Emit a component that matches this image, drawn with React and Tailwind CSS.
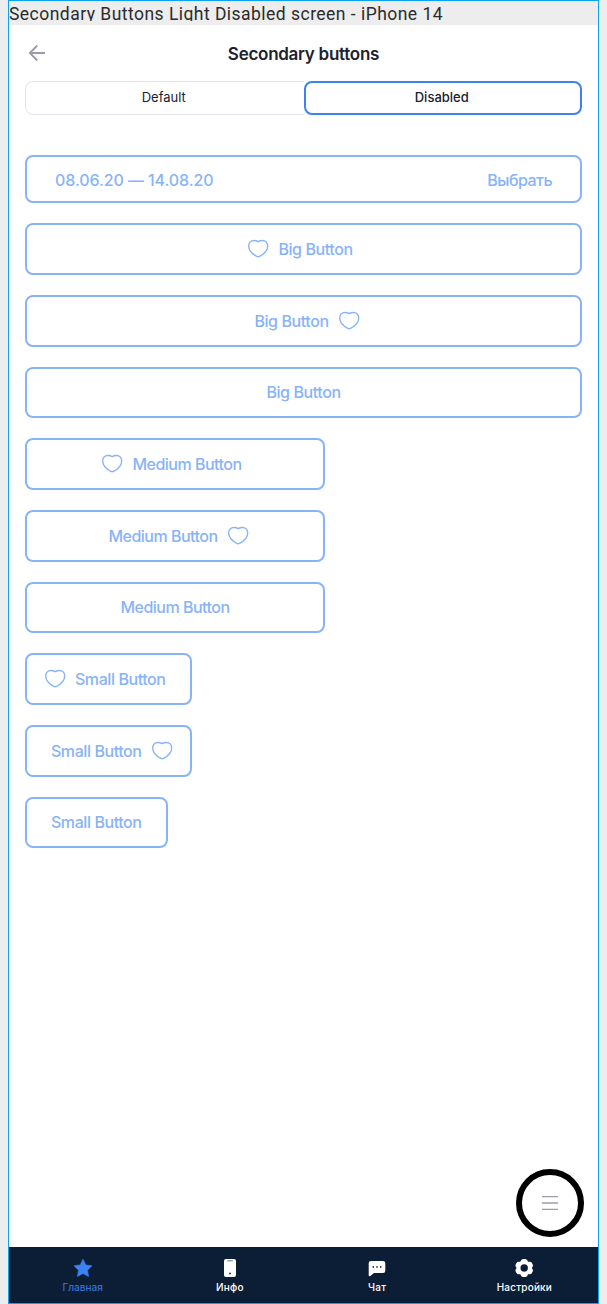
import React from "react";

function Heart() {
  return (
    <svg className="size-6 shrink-0" viewBox="0 0 24 24" fill="none" stroke="currentColor" strokeWidth="1.4" strokeLinejoin="round">
      <path d="M12.2 4.7C10.9 3.9 9.5 3.5 8 3.5C4.9 3.5 2.7 5.7 2.7 8.9C2.7 13.5 7.2 17.4 10.9 19.4Q12.2 20.1 13.5 19.4C17.2 17.4 21.7 13.5 21.7 8.9C21.7 5.7 19.5 3.5 16.4 3.5C14.9 3.5 13.5 3.9 12.2 4.7Z" />
    </svg>
  );
}

const sizes = {
  Big: "w-full",
  Medium: "w-[300px]",
  Small: "w-[166.5px]",
  SmallPlain: "w-[142.5px]",
};

const tracking = {
  Big: "tracking-[-0.42px]",
  Medium: "tracking-[-0.51px]",
  Small: "tracking-[-0.42px]",
};

function OutlineButton({ size, icon }) {
  const pad = icon === "left" ? "pl-4 pr-6" : icon === "right" ? "pl-6 pr-4" : "px-6 pb-0.5";
  const width = size === "Small" && !icon ? sizes.SmallPlain : sizes[size];
  return (
    <button
      disabled
      className={`flex shrink-0 items-center justify-center gap-2 rounded-lg border-2 border-[#88b3f8] text-base font-medium whitespace-nowrap text-[#88b3f8] ${icon ? "h-[52px]" : "h-[51px]"} ${pad} ${width} ${tracking[size]}`}
    >
      {icon === "left" && <Heart />}
      <span>{size} Button</span>
      {icon === "right" && <Heart />}
    </button>
  );
}

function NavItem({ label, active, children }) {
  return (
    <div className={`flex flex-1 flex-col items-center pt-[11px] ${active ? "text-[#3c82f1]" : "text-white"}`}>
      <svg className="size-5" viewBox="0 0 20 20" fill="currentColor">
        {children}
      </svg>
      <span className={`mt-[3px] text-[10px] leading-3 font-medium ${active ? "tracking-[0.02px] text-[#3572d4]" : "tracking-[0.2px]"}`}>{label}</span>
    </div>
  );
}

export default function App() {
  return (
    <div className="h-[1304px] w-[607px] bg-[#ededed] pl-2 font-['Inter','Roboto',sans-serif] text-[#20212f]">
      <div className="relative flex h-[1304px] w-[591px] flex-col border border-[#08a5ee] bg-white">
        <div className="h-6 shrink-0 bg-[#ededed]">
          <div className="h-[20px] overflow-hidden font-['Roboto',sans-serif] text-[17.5px] leading-[26px] tracking-[0.47px] whitespace-nowrap text-[#2b2b2b]">
            Secondary Buttons Light Disabled screen - iPhone 14
          </div>
        </div>

        <header className="grid h-14 shrink-0 grid-cols-[1fr_auto_1fr] items-center px-4">
          <svg className="ml-[3px] size-[18px]" viewBox="0 0 18 18" fill="none" stroke="#9a9cac" strokeWidth="1.8">
            <path d="M17 9H2M9.3 1.5L1.8 9L9.3 16.5" />
          </svg>
          <h1 className="pt-[3px] text-[17px] font-semibold tracking-[-0.27px]">Secondary buttons</h1>
        </header>

        <div className="mx-4 grid h-[34px] shrink-0 grid-cols-2 text-[13px]">
          <div className="flex items-center justify-center rounded-l-lg border border-r-0 border-[#e4e5ee] pr-0.5 pb-px">Default</div>
          <div className="flex items-center justify-center rounded-lg border-2 border-[#3c82f1] pr-0.5 pb-px font-medium">Disabled</div>
        </div>

        <main className="mt-10 flex grow flex-col items-start gap-5 px-4">
          <button
            disabled
            className="flex h-12 w-full items-center justify-between rounded-lg border-2 border-[#88b3f8] px-7 pt-0.5 text-base font-medium text-[#88b3f8]"
          >
            <span className="tracking-[-0.08px]">08.06.20 — 14.08.20</span>
            <span className="tracking-[-0.52px]">Выбрать</span>
          </button>
          <OutlineButton size="Big" icon="left" />
          <OutlineButton size="Big" icon="right" />
          <OutlineButton size="Big" />
          <OutlineButton size="Medium" icon="left" />
          <OutlineButton size="Medium" icon="right" />
          <OutlineButton size="Medium" />
          <OutlineButton size="Small" icon="left" />
          <OutlineButton size="Small" icon="right" />
          <OutlineButton size="Small" />
        </main>

        <button className="absolute right-[14px] bottom-[66px] flex size-[68px] items-center justify-center rounded-full border-6 border-black bg-white">
          <svg className="size-4" viewBox="0 0 16 16" fill="none" stroke="#9a9cac" strokeWidth="1.3">
            <path d="M0 1.7H16M0 8H16M0 14.3H16" />
          </svg>
        </button>

        <nav className="flex h-14 shrink-0 bg-[#0c1d36]">
          <NavItem label="Главная" active>
            <path d="M10 1.2L12.8 6.9L19 7.8L14.5 12.2L15.6 18.5L10 15.5L4.4 18.5L5.5 12.2L1 7.8L7.2 6.9Z" stroke="currentColor" strokeWidth="0.6" strokeLinejoin="round" />
          </NavItem>
          <NavItem label="Инфо">
            <rect x="4" y="1" width="12" height="18" rx="2" />
            <path d="M7.2 2.8H12.8" stroke="#8d96a5" strokeWidth="1.3" />
            <rect x="9.2" y="14.7" width="1.6" height="1.6" fill="#0c1d36" />
          </NavItem>
          <NavItem label="Чат">
            <path d="M4 3H16Q18.3 3 18.3 5.3V12.7Q18.3 15 16 15H7L3 18.2Q1.7 18.8 1.7 17.2V5.3Q1.7 3 4 3Z" />
            <path d="M5.6 9H7M9.3 9H10.7M13 9H14.4" stroke="#0c1d36" strokeWidth="1.3" />
          </NavItem>
          <NavItem label="Настройки">
            <path
              fillRule="evenodd"
              d="M7 2.5Q7.7 1 9.2 1H11.2Q12.7 1 13.4 2.5L14.2 3.7L15.7 3.8Q17.2 3.7 17.9 5L18.7 6.5Q19.4 7.8 18.4 9L17.8 10L18.4 11Q19.4 12.2 18.7 13.5L17.9 15Q17.2 16.3 15.7 16.2L14.2 16.3L13.4 17.5Q12.7 19 11.2 19H9.2Q7.7 19 7 17.5L6.2 16.3L4.7 16.2Q3.2 16.3 2.5 15L1.7 13.5Q1 12.2 2 11L2.6 10L2 9Q1 7.8 1.7 6.5L2.5 5Q3.2 3.7 4.7 3.8L6.2 3.7ZM10.2 6.3A3.7 3.7 0 1 0 10.2 13.7A3.7 3.7 0 1 0 10.2 6.3Z"
            />
          </NavItem>
        </nav>
      </div>
    </div>
  );
}
